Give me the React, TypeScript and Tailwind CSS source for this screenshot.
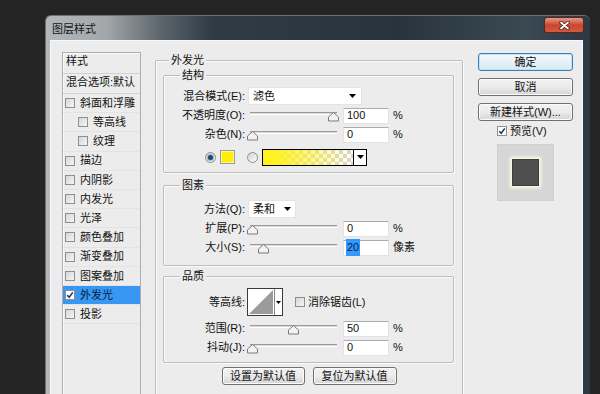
import React from 'react';

type StyleItem = { label: string; sub?: boolean; checked?: boolean; active?: boolean };

const styleItems: StyleItem[] = [
  { label: '斜面和浮雕' },
  { label: '等高线', sub: true },
  { label: '纹理', sub: true },
  { label: '描边' },
  { label: '内阴影' },
  { label: '内发光' },
  { label: '光泽' },
  { label: '颜色叠加' },
  { label: '渐变叠加' },
  { label: '图案叠加' },
  { label: '外发光', checked: true, active: true },
  { label: '投影' },
];

function Check({ checked = false }: { checked?: boolean }) {
  return (
    <span
      className={`flex h-[10px] w-[10px] shrink-0 items-center justify-center border border-[#8e8f8f] ${
        checked ? 'bg-white' : 'bg-gradient-to-br from-[#d6d6d6] to-[#f6f6f6]'
      }`}
    >
      {checked && (
        <svg width="8" height="8" viewBox="0 0 8 8">
          <path d="M1.2 4.2 L3.2 6.3 L6.8 1.4" fill="none" stroke="#1d3b62" strokeWidth="1.6" />
        </svg>
      )}
    </span>
  );
}

function Radio({ on = false }: { on?: boolean }) {
  return (
    <span className="flex h-[11px] w-[11px] shrink-0 items-center justify-center rounded-full border border-[#8e8f8f] bg-gradient-to-br from-[#d4d4d4] to-[#fafafa]">
      {on && <span className="h-[5px] w-[5px] rounded-full bg-[#24496e] shadow-[0_0_1px_1px_#8fb3d3]" />}
    </span>
  );
}

function DownArrow() {
  return (
    <svg width="7" height="4" viewBox="0 0 7 4">
      <path d="M0 0 H7 L3.5 4 Z" fill="#000" />
    </svg>
  );
}

function Slider({ thumb }: { thumb: number }) {
  // thumb = centre of the thumb, px from the left of the track
  return (
    <div className="relative ml-[3px] h-[19px] w-[91px] pt-[6px]">
      <div className="mx-[2px] h-[3px] border-t border-[#9a9a9a] border-b border-b-white bg-[#dadada]" />
      <svg
        width="11"
        height="10"
        viewBox="0 0 11 10"
        className="absolute top-[6px]"
        style={{ left: 2 + thumb - 5.5 }}
      >
        <path d="M5.5 0.5 L10.5 5 L10.5 9 L0.5 9 L0.5 5 Z" fill="#f2f2f2" stroke="#7b7b7b" />
      </svg>
    </div>
  );
}

function NumBox({ value, selected = false }: { value: string; selected?: boolean }) {
  return (
    <div className="ml-[4px] flex h-[16px] w-[46px] items-center border border-[#e2e3ea] border-t-[#abadb3] bg-white pl-[2px]">
      <span className={selected ? 'bg-[#3399ff] px-[1px] text-[#0b2447]' : 'px-[1px]'}>{value}</span>
    </div>
  );
}

function SliderRow({
  label,
  thumb,
  value,
  unit = '%',
  selected = false,
  className = '',
}: {
  label: string;
  thumb: number;
  value: string;
  unit?: string;
  selected?: boolean;
  className?: string;
}) {
  return (
    <div className={`flex h-[19px] items-center ${className}`}>
      <span className="w-[81px] text-right">{label}</span>
      <Slider thumb={thumb} />
      <NumBox value={value} selected={selected} />
      <span className="ml-[4px]">{unit}</span>
    </div>
  );
}

function Group({
  title,
  className = '',
  legendClass = '',
  children,
}: {
  title: string;
  className?: string;
  legendClass?: string;
  children: React.ReactNode;
}) {
  return (
    <fieldset
      className={`rounded-[2px] border border-[#bdbdbd] shadow-[inset_1px_1px_0_#fbfbfb,1px_1px_0_#fbfbfb] ${className}`}
    >
      <legend className={`bg-[#ececec] px-[2px] leading-[14px] ${legendClass}`}>{title}</legend>
      {children}
    </fieldset>
  );
}

function Btn({ children, className = '', primary = false }: { children: React.ReactNode; className?: string; primary?: boolean }) {
  return (
    <button
      className={`flex h-[18px] items-center justify-center rounded-[3px] border leading-none ${
        primary
          ? 'border-[#3c7fb1] bg-gradient-to-b from-[#f4fafd] to-[#d7e9f3] shadow-[inset_0_0_0_1px_#bfe4f7]'
          : 'border-[#707070] bg-gradient-to-b from-[#f3f3f3] via-[#ebebeb] to-[#d5d5d5] shadow-[inset_0_0_0_1px_#fcfcfc]'
      } ${className}`}
    >
      {children}
    </button>
  );
}

export default function App() {
  return (
    <div className="h-[394px] overflow-hidden bg-[#242424] pl-[45px] pt-[15px] font-['Liberation_Sans','Noto_Sans_CJK_SC',sans-serif] text-[11px] text-[#111]">
      <div className="flex h-[400px] w-[545px] flex-col rounded-t-[6px] border-l border-t border-[#6b7075] bg-[linear-gradient(to_right,#b4b7b9_0px,#a3a7aa_60px,#5c656c_115px,#2f3c46_165px,#27343e_350px,#3b4953_480px,#2b3843_545px)]">
        {/* title bar */}
        <div className="flex h-[24px] shrink-0 items-start justify-between pl-[6px] pr-[6px]">
          <span className="mt-[6px] leading-[14px] text-[#151515]">图层样式</span>
          <div className="mt-[1px] flex h-[16px] w-[40px] items-center justify-center rounded-[3px] border border-[#5a2620] bg-gradient-to-b from-[#e49a88] via-[#c7452f] to-[#d35a3f]">
            <svg width="11" height="9" viewBox="0 0 11 9">
              <path d="M2 1.5 L9 7.5 M9 1.5 L2 7.5" stroke="#4a1d17" strokeWidth="3.4" strokeLinecap="round" />
              <path d="M2 1.5 L9 7.5 M9 1.5 L2 7.5" stroke="#ffffff" strokeWidth="1.8" strokeLinecap="round" />
            </svg>
          </div>
        </div>

        {/* client area */}
        <div className="ml-[4px] mr-[7px] flex flex-1 border border-[#f7f8f9] bg-[#ececec] pl-[11px] pt-[11px]">
          {/* styles list */}
          <div className="flex w-[79px] shrink-0 flex-col border border-[#adadad] shadow-[inset_1px_1px_0_#fafafa]">
            <div className="flex h-[21px] items-center border-b border-[#d2d2d2] pb-[3px] pl-[3px]">样式</div>
            <div className="flex h-[20px] items-center border-b border-[#d2d2d2] pb-[2px] pl-[3px]">混合选项:默认</div>
            {styleItems.map((item) => (
              <div
                key={item.label}
                className={`flex h-[19.2px] items-center gap-[5px] border-b border-[#e3e3e3] ${
                  item.sub ? 'pl-[15px]' : 'pl-[2px]'
                } ${item.active ? 'bg-[#3797f3] text-[#0a1a33]' : ''}`}
              >
                <Check checked={item.checked} />
                <span>{item.label}</span>
              </div>
            ))}
          </div>

          {/* main options */}
          <Group title="外发光" className="ml-[14px] mt-[1px] w-[308px] self-start pb-[30px]" legendClass="ml-[13px]">
            <Group title="结构" className="ml-[7px] mr-[8px] mt-[1px] pb-[6px]" legendClass="ml-[16px]">
              <div className="mt-[5px] flex h-[18px] items-center">
                <span className="w-[81px] text-right">混合模式(E):</span>
                <div className="ml-[3px] flex h-[18px] w-[114px] items-center justify-between border border-[#e4e4e4] bg-white pl-[4px] pr-[5px]">
                  <span>滤色</span>
                  <DownArrow />
                </div>
              </div>
              <SliderRow className="mt-[1px]" label="不透明度(O):" thumb={83} value="100" />
              <SliderRow label="杂色(N):" thumb={2} value="0" />
              <div className="mt-[4px] flex h-[18px] items-center pl-[41px]">
                <Radio on />
                <div className="ml-[4px] h-[14px] w-[15px] border border-[#9a9a9a] bg-[#ffee00] shadow-[inset_0_0_0_1px_#fff7a0]" />
                <span className="ml-[12px]">
                  <Radio />
                </span>
                <div className="ml-[4px] flex h-[17px] w-[105px] border border-black">
                  <div className="flex-1 bg-[image:repeating-conic-gradient(#d6d6d6_0%_25%,#ffffff_0%_50%)] bg-[length:8px_8px]">
                    <div className="h-full w-full bg-[image:linear-gradient(to_right,#fff21e_0%,#fff21e_12%,rgba(255,242,30,0)_100%)]" />
                  </div>
                  <div className="flex w-[13px] items-center justify-center border-l border-black bg-white">
                    <DownArrow />
                  </div>
                </div>
              </div>
            </Group>

            <Group title="图素" className="ml-[7px] mr-[8px] mt-[5px] pb-[8px]" legendClass="ml-[16px]">
              <div className="mt-[8px] flex h-[18px] items-center">
                <span className="w-[81px] text-right">方法(Q):</span>
                <div className="ml-[3px] flex h-[18px] w-[48px] items-center justify-between border border-[#e4e4e4] bg-white pl-[4px] pr-[4px]">
                  <span>柔和</span>
                  <DownArrow />
                </div>
              </div>
              <SliderRow className="mt-[1px]" label="扩展(P):" thumb={2} value="0" />
              <SliderRow label="大小(S):" thumb={13} value="20" unit="像素" selected />
            </Group>

            <Group title="品质" className="ml-[7px] mr-[8px] mt-[3px] pb-[5px]" legendClass="ml-[16px]">
              <div className="mt-[5px] flex h-[28px] items-center">
                <span className="w-[81px] text-right">等高线:</span>
                <div className="ml-[2px] flex h-[28px] w-[36px] border border-[#3a3a3a] bg-white">
                  <svg width="26" height="26" viewBox="0 0 26 26" className="m-0">
                    <path d="M1 25 L25 1 L25 25 Z" fill="#9b9b9b" />
                  </svg>
                  <div className="flex flex-1 items-center justify-center border-l border-[#8a8a8a]">
                    <svg width="5" height="3" viewBox="0 0 5 3">
                      <path d="M0 0 H5 L2.5 3 Z" fill="#000" />
                    </svg>
                  </div>
                </div>
                <span className="ml-[12px]">
                  <Check />
                </span>
                <span className="ml-[3px]">消除锯齿(L)</span>
              </div>
              <SliderRow className="mt-[3px]" label="范围(R):" thumb={43} value="50" />
              <SliderRow label="抖动(J):" thumb={2} value="0" />
            </Group>

            <div className="mt-[4px] flex justify-center gap-[8px]">
              <Btn className="w-[83px]">设置为默认值</Btn>
              <Btn className="w-[84px]">复位为默认值</Btn>
            </div>
          </Group>

          {/* buttons + preview */}
          <div className="ml-[15px] mt-[1px] flex w-[95px] shrink-0 flex-col">
            <Btn primary>确定</Btn>
            <Btn className="mt-[7px]">取消</Btn>
            <Btn className="mt-[7px]">新建样式(W)...</Btn>
            <div className="ml-[19px] mt-[4px] flex h-[12px] items-center gap-[3px]">
              <Check checked />
              <span>预览(V)</span>
            </div>
            <div className="mt-[7px] flex h-[57px] w-[57px] items-center justify-center self-center border border-[#d0d0d0] bg-[#d6d6d6]">
              <div className="h-[27px] w-[27px] border border-[#3d3d3d] bg-[#4f4f4f] shadow-[0_0_3px_2px_#fffbe3]" />
            </div>
          </div>
        </div>
      </div>
    </div>
  );
}
